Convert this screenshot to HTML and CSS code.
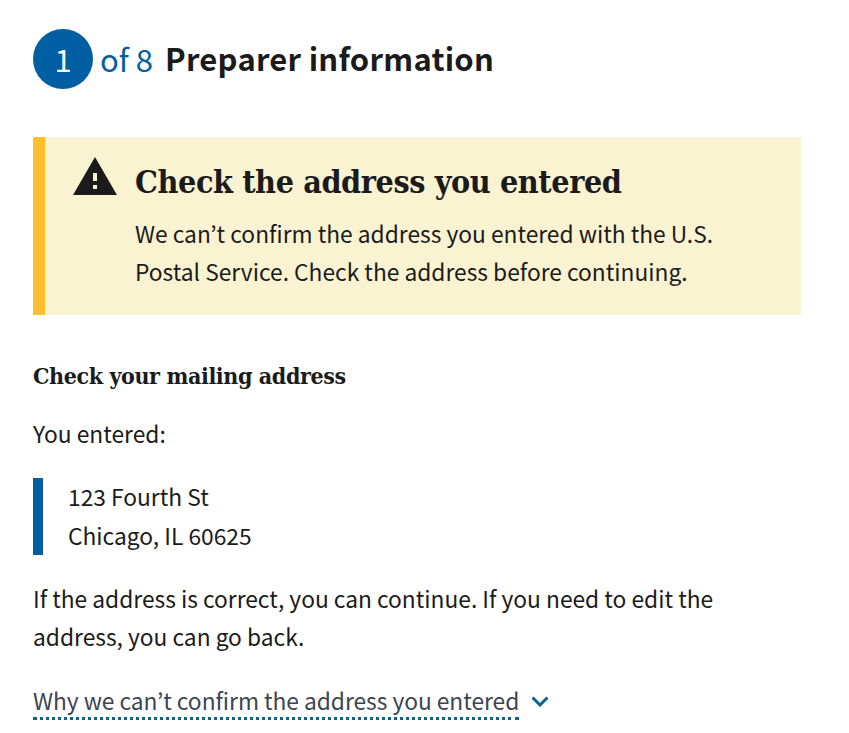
FILE: index.html
```html
<!DOCTYPE html>
<html lang="en">
<head>
<meta charset="utf-8">
<title>Preparer information</title>
<link rel="stylesheet" href="styles.css">
</head>
<body>
<main class="page">
  <h1 class="step">
    <span class="step-current">1</span>
    <span class="step-total">of 8</span>
    <span class="step-title">Preparer information</span>
  </h1>
  <section class="alert">
    <svg class="alert-icon" viewBox="0 0 44 38" aria-hidden="true"><path fill-rule="evenodd" d="M22 0L44 38H0ZM20 16V24H24V16ZM20 28V32H24V28Z"/></svg>
    <div class="alert-body">
      <h2 class="alert-heading">Check the address you entered</h2>
      <p class="text">We can’t confirm the address you entered with the U.S.<br>Postal Service. Check the address before continuing.</p>
    </div>
  </section>
  <h3 class="subheading">Check your mailing address</h3>
  <p class="text">You entered:</p>
  <address class="address">123 Fourth St<br>Chicago, IL 60625</address>
  <p class="text">If the address is correct, you can continue. If you need to edit the<br>address, you can go back.</p>
  <button class="disclosure" type="button"><span class="disclosure-label">Why we can’t confirm the address you entered</span><svg class="chevron" viewBox="0 0 18 11" aria-hidden="true"><path d="M1.5 1.5L9 9L16.5 1.5"/></svg></button>
</main>
</body>
</html>
```
FILE: styles.css
```css
* { box-sizing: border-box; }
body {
  margin: 0;
  background: #fff;
  color: #1b1b1b;
  font-family: "Noto Sans CJK KR", "Noto Sans", sans-serif;
  font-size: 22.78px;
  line-height: 38px;
}
h1, h2, h3, p { margin: 0; }
.page { width: 849px; height: 733px; padding: 29px 48px 0 33px; overflow: hidden; }
.step {
  display: flex;
  align-items: flex-start;
  height: 60px;
  font-size: 31px;
  line-height: 60px;
  white-space: nowrap;
}
.step-current {
  width: 60px;
  height: 60px;
  border-radius: 50%;
  background: #005ea2;
  color: #fff;
  font-weight: 400;
  text-align: center;
}
.step-total { margin-left: 7px; color: #005ea2; font-weight: 400; }
.step-title { margin-left: 12px; font-weight: 700; line-height: 58px; letter-spacing: 0.25px; }
.alert {
  display: flex;
  height: 178px;
  margin-top: 48px;
  padding: 20px 0 0 28px;
  border-left: 12px solid #ffbe2e;
  background: #faf3d1;
}
.alert-icon { width: 44px; height: 38px; fill: #1b1b1b; }
.alert-body { margin-left: 18px; }
.alert-heading {
  margin: 5px 0 13px;
  font-family: "DejaVu Serif Condensed", "DejaVu Serif", serif;
  font-size: 32px;
  line-height: 40px;
  letter-spacing: -0.41px;
  white-space: nowrap;
}
.text { white-space: nowrap; }
.subheading {
  margin: 42px 0 20px;
  font-family: "DejaVu Serif Condensed", "DejaVu Serif", serif;
  font-size: 23px;
  line-height: 38px;
  letter-spacing: -0.4px;
}
.address {
  height: 77px;
  margin: 25px 0;
  padding-left: 25px;
  border-left: 10px solid #005ea2;
  font-style: normal;
  line-height: 38.5px;
}
.disclosure {
  display: flex;
  align-items: center;
  margin-top: 26px;
  padding: 0;
  border: 0;
  background: none;
  color: #3d4551;
  font: inherit;
  letter-spacing: -0.03px;
}
.disclosure-label { height: 38px; border-bottom: 3px dotted #0b648d; }
.chevron { width: 18px; height: 11px; margin: 1px 0 0 12px; fill: none; stroke: #0b648d; stroke-width: 3; }
```
